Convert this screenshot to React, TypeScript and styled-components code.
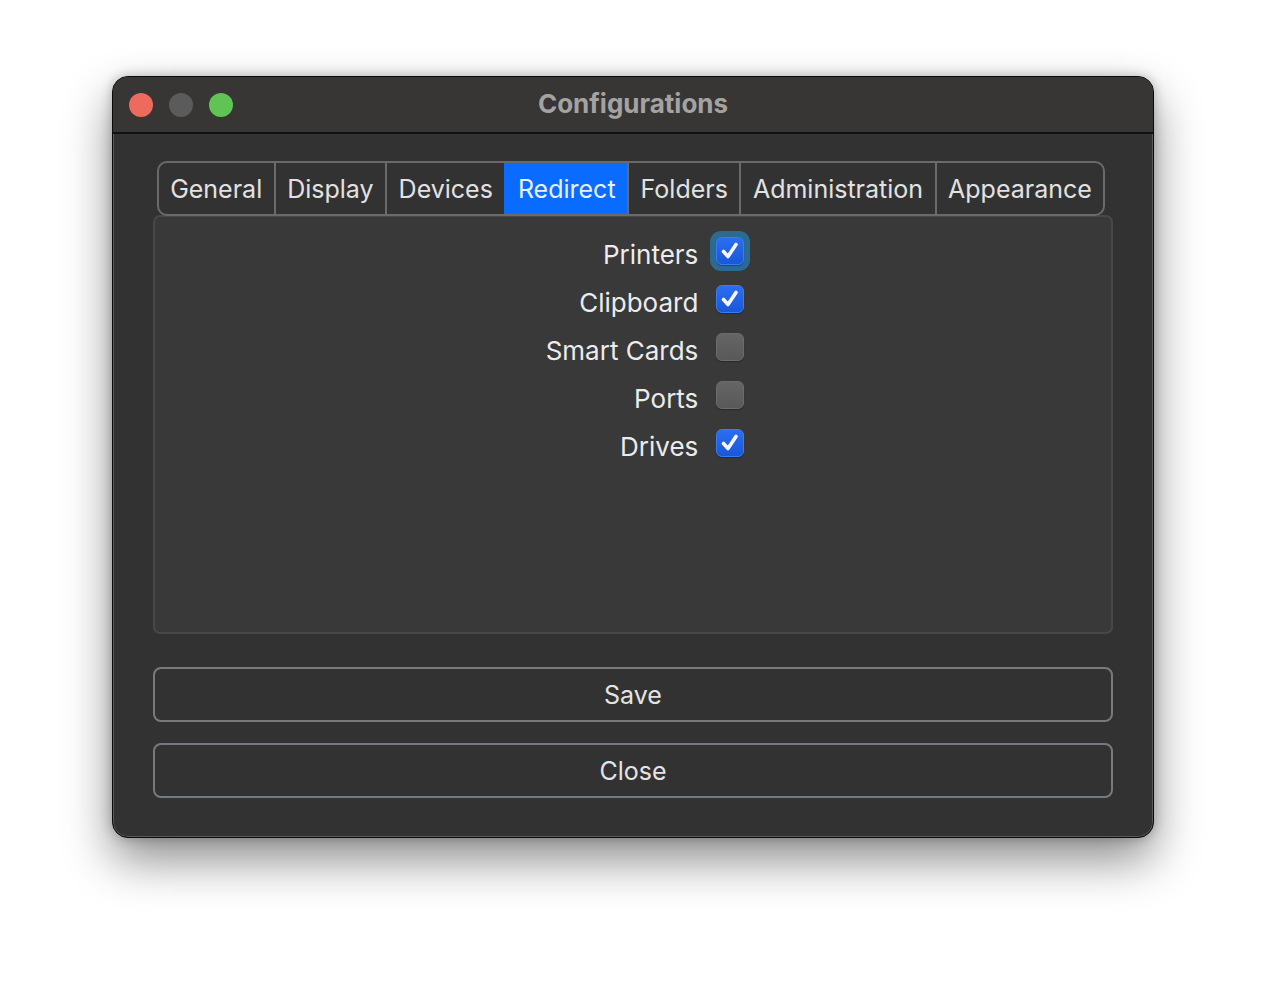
import React, { useState } from 'react';
import styled, { createGlobalStyle } from 'styled-components';

const GlobalStyle = createGlobalStyle`
  html, body {
    margin: 0;
    padding: 0;
    background: #ffffff;
  }
  body {
    font-family: Inter, "Liberation Sans", sans-serif;
  }
`;

const Page = styled.div`
  width: 1266px;
  height: 986px;
  display: flex;
  justify-content: center;
  padding-top: 76px;
  box-sizing: border-box;
`;

const Window = styled.div`
  width: 1042px;
  height: 762px;
  box-sizing: border-box;
  border: 1px solid #0c0c0c;
  border-radius: 16px;
  background: #323232;
  box-shadow: inset 0 0 0 1px #5a5a5a, 0 22px 48px rgba(0, 0, 0, 0.45), 0 0 12px rgba(0, 0, 0, 0.25);
  display: flex;
  flex-direction: column;
  overflow: hidden;
`;

const TitleBar = styled.div`
  height: 55px;
  flex-shrink: 0;
  background: #383635;
  border-bottom: 2px solid #111;
  display: flex;
  align-items: center;
  position: relative;
  padding-left: 16px;
`;

const Lights = styled.div`
  display: flex;
  gap: 16px;
`;

const Light = styled.span<{ $color: string }>`
  width: 24px;
  height: 24px;
  border-radius: 50%;
  background: ${(p) => p.$color};
`;

const Title = styled.div`
  position: absolute;
  left: 0;
  right: 0;
  top: 0;
  bottom: 0;
  display: flex;
  align-items: center;
  justify-content: center;
  font-size: 26px;
  font-weight: 700;
  color: #a3a3a3;
  padding-bottom: 3px;
  pointer-events: none;
`;

const Body = styled.div`
  flex: 1;
  padding: 27px 40px 0 40px;
  display: flex;
  flex-direction: column;
`;

const TabRow = styled.div`
  display: flex;
  justify-content: center;
  padding-right: 4px;
`;

const TabBar = styled.div`
  display: flex;
  flex-shrink: 0;
  height: 55px;
  box-sizing: border-box;
  border: 2px solid #6a6a6a;
  border-radius: 10px;
  overflow: hidden;
  background: #323232;
  position: relative;
  z-index: 1;
  margin-bottom: -1px;
`;

const Tab = styled.div<{ $active?: boolean }>`
  display: flex;
  align-items: center;
  flex-shrink: 0;
  white-space: nowrap;
  padding: 0 11.5px;
  font-size: 25px;
  color: ${(p) => (p.$active ? '#e8f0ff' : '#e2e2e2')};
  background: ${(p) => (p.$active ? '#0a6bff' : 'transparent')};
  border-left: 2px solid ${(p) => (p.$active ? '#0a6bff' : '#6a6a6a')};
  &:first-child {
    border-left: none;
  }
`;

const Panel = styled.div`
  height: 419px;
  box-sizing: border-box;
  background: #393939;
  border: 2px solid #484848;
  border-radius: 7px;
  padding-top: 10px;
  display: flex;
  justify-content: center;
`;

const Form = styled.div`
  display: grid;
  grid-template-columns: auto 40px;
  column-gap: 12px;
  grid-auto-rows: 48px;
  align-items: center;
  margin-left: 30px;
  align-self: flex-start;
`;

const Label = styled.div`
  font-size: 26px;
  color: #ececec;
  text-align: right;
  padding-top: 7px;
`;

const BoxCell = styled.div`
  display: flex;
  justify-content: center;
  align-items: center;
  height: 40px;
`;

const Ring = styled.div<{ $focus?: boolean }>`
  width: 40px;
  height: 40px;
  border-radius: 11px;
  display: flex;
  align-items: center;
  justify-content: center;
  background: ${(p) => (p.$focus ? '#2b6a93' : 'transparent')};
`;

const Box = styled.div<{ $checked: boolean }>`
  width: 28px;
  height: 28px;
  box-sizing: border-box;
  border-radius: 6px;
  display: flex;
  align-items: center;
  justify-content: center;
  background: ${(p) => (p.$checked ? 'linear-gradient(#2a6ff0, #1a56d8)' : 'linear-gradient(#656565, #595959)')};
  border: 1px solid ${(p) => (p.$checked ? '#3a7cf2' : '#6c6c6c')};
  box-shadow: 0 1px 1px rgba(0, 0, 0, 0.3);
`;

const Buttons = styled.div`
  display: flex;
  flex-direction: column;
  gap: 21px;
  margin-top: 33px;
`;

const Button = styled.button`
  height: 55px;
  box-sizing: border-box;
  border: 2px solid #777a7d;
  border-radius: 8px;
  background: #323232;
  color: #e4e4e4;
  font-family: Inter, "Liberation Sans", sans-serif;
  font-size: 25px;
  padding: 0;
`;

const Check = () => (
  <svg width="22" height="22" viewBox="0 0 22 22">
    <path d="M4.5 11.5 L9 16.5 L17 4.5" fill="none" stroke="#f4f7ff" strokeWidth="3.6" strokeLinecap="round" strokeLinejoin="round" />
  </svg>
);

const tabs = ['General', 'Display', 'Devices', 'Redirect', 'Folders', 'Administration', 'Appearance'];

const options = [
  { label: 'Printers', checked: true, focus: true },
  { label: 'Clipboard', checked: true },
  { label: 'Smart Cards', checked: false },
  { label: 'Ports', checked: false },
  { label: 'Drives', checked: true },
];

export default function App() {
  const [values, setValues] = useState(options.map((o) => o.checked));

  const toggle = (i: number) => {
    setValues(values.map((v, j) => (j === i ? !v : v)));
  };

  return (
    <Page>
      <GlobalStyle />
      <Window>
        <TitleBar>
          <Lights>
            <Light $color="#ed6a5e" />
            <Light $color="#5b5b5b" />
            <Light $color="#5fc453" />
          </Lights>
          <Title>Configurations</Title>
        </TitleBar>
        <Body>
          <TabRow>
            <TabBar>
              {tabs.map((t) => (
                <Tab key={t} $active={t === 'Redirect'}>
                  {t}
                </Tab>
              ))}
            </TabBar>
          </TabRow>
          <Panel>
            <Form>
              {options.map((o, i) => (
                <React.Fragment key={o.label}>
                  <Label>{o.label}</Label>
                  <BoxCell onClick={() => toggle(i)}>
                    <Ring $focus={o.focus}>
                      <Box $checked={values[i]}>{values[i] && <Check />}</Box>
                    </Ring>
                  </BoxCell>
                </React.Fragment>
              ))}
            </Form>
          </Panel>
          <Buttons>
            <Button>Save</Button>
            <Button>Close</Button>
          </Buttons>
        </Body>
      </Window>
    </Page>
  );
}
